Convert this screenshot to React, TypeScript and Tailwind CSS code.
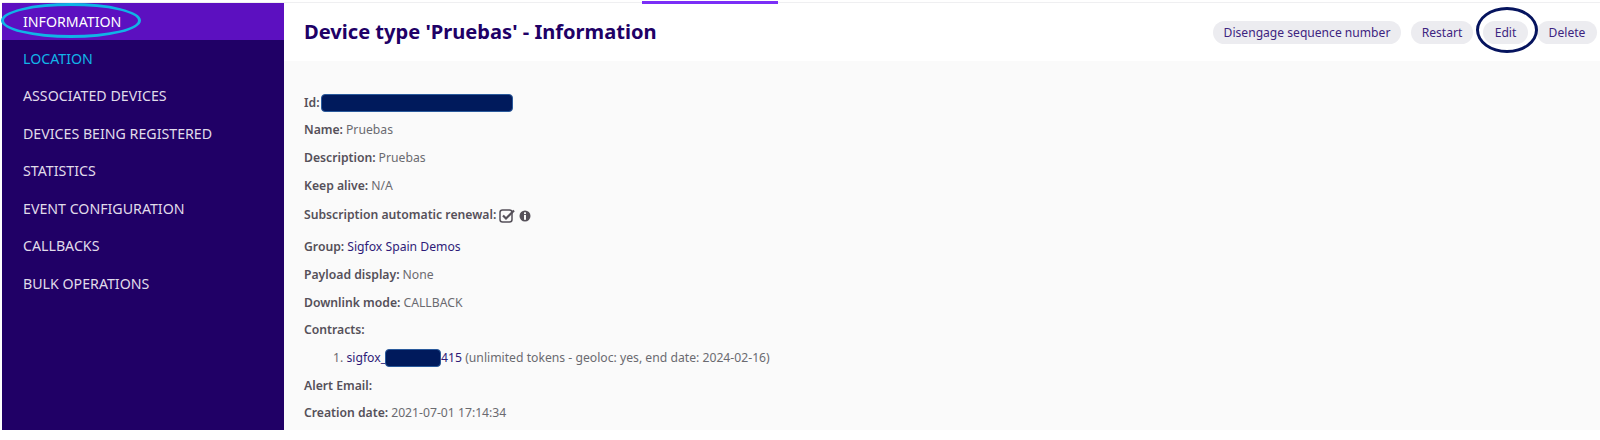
import React from 'react';

const navItems = [
  'INFORMATION',
  'LOCATION',
  'ASSOCIATED DEVICES',
  'DEVICES BEING REGISTERED',
  'STATISTICS',
  'EVENT CONFIGURATION',
  'CALLBACKS',
  'BULK OPERATIONS',
];

const actions = [
  { label: 'Disengage sequence number', width: 'w-[188px]', gap: 'mr-[10px]' },
  { label: 'Restart', width: 'w-[62px]', gap: 'mr-[10px]' },
  { label: 'Edit', width: 'w-[45px]', gap: 'mr-[9px]' },
  { label: 'Delete', width: 'w-[60px]', gap: '' },
];

function Redacted({ className }: { className: string }) {
  return <span className={`inline-block h-[18px] ${className} rounded-[4px] bg-[#001a5c] border border-[#2a5a9c] align-middle`} />;
}

function Row({ label, className = '', children }: { label: string; className?: string; children?: React.ReactNode }) {
  return (
    <div className={`flex h-[27.7px] items-center gap-[3px] whitespace-pre ${className}`}>
      <b className="font-semibold text-[#555059]">{label}</b>
      {children}
    </div>
  );
}

export default function App() {
  return (
    <div className="h-[440px] w-[1600px] overflow-hidden bg-white pl-[2px] pt-[2px] font-['Noto_Sans',sans-serif]">
      <div className="relative h-[428px] w-[1598px] border-t border-[#efeff1]">
        <div className="flex h-full">
          <nav className="flex h-full w-[282px] shrink-0 flex-col bg-[#200066] text-[14.2px] leading-[37.4px] text-[#e0dcea]">
            {navItems.map((item, i) => (
              <div
                key={item}
                className={
                  i === 0
                    ? 'h-[36.5px] bg-[#5c10c0] pl-[21px] text-white'
                    : i === 1
                      ? 'h-[37.5px] pl-[21px] text-[#12b5e8]'
                      : 'h-[37.5px] pl-[21px]'
                }
              >
                {item}
              </div>
            ))}
          </nav>

          <main className="flex min-w-0 flex-1 flex-col">
            <header className="flex h-[58px] shrink-0 items-center justify-between bg-white pl-[20px] pr-[3px]">
              <h1 className="text-[20.1px] font-bold text-[#200066]">Device type 'Pruebas' - Information</h1>
              <div className="flex">
                {actions.map((action) => (
                  <button
                    key={action.label}
                    className={`h-[23px] ${action.width} ${action.gap} rounded-full bg-[#ececf0] text-[12.1px] leading-[23px] text-[#3d2480]`}
                  >
                    {action.label}
                  </button>
                ))}
              </div>
            </header>

            <section className="flex-1 bg-[#fafafa] pl-[20px] pt-[28px] text-[12.2px] text-[#6a6a70]">
              <Row label="Id:">
                <Redacted className="-ml-[2px] w-[192px]" />
              </Row>
              <Row label="Name:">
                <span>Pruebas</span>
              </Row>
              <Row label="Description:">
                <span>Pruebas</span>
              </Row>
              <Row label="Keep alive:">
                <span>N/A</span>
              </Row>
              <Row label="Subscription automatic renewal:" className="mb-[4.5px] mt-[1.5px]">
                <svg width="17" height="15" viewBox="0 0 17 15" fill="none" stroke="#555059" strokeWidth="1.5">
                  <rect x="1" y="2" width="12" height="12" rx="2.5" />
                  <path d="M4 7.5 7 10.5 15 2.5" strokeWidth="2.2" />
                </svg>
                <svg width="12" height="12" viewBox="0 0 12 12" className="mt-[2px]">
                  <circle cx="6" cy="6" r="5.5" fill="#555059" />
                  <rect x="5" y="2.3" width="2" height="1.8" fill="#fafafa" />
                  <rect x="5" y="5" width="2" height="4.8" fill="#fafafa" />
                </svg>
              </Row>
              <Row label="Group:">
                <span className="text-[#2e1a78]">Sigfox Spain Demos</span>
              </Row>
              <Row label="Payload display:">
                <span>None</span>
              </Row>
              <Row label="Downlink mode:">
                <span>CALLBACK</span>
              </Row>
              <Row label="Contracts:" />
              <div className="flex h-[27.7px] items-center whitespace-pre pl-[29px]">
                <span>1. </span>
                <span className="text-[#2e1a78]">sigfox_</span>
                <Redacted className="-ml-[1px] w-[56px]" />
                <span className="text-[#2e1a78]">415</span>
                <span> (unlimited tokens - geoloc: yes, end date: 2024-02-16)</span>
              </div>
              <Row label="Alert Email:" />
              <Row label="Creation date:">
                <span>2021-07-01 17:14:34</span>
              </Row>
            </section>
          </main>
        </div>

        <span className="absolute left-[640px] top-[-2px] h-[3px] w-[136px] bg-[#7b2ff7]" />
        <span className="absolute left-[-1px] top-0 h-[35px] w-[140px] rounded-[50%] border-[3px] border-[#10b4e6]" />
        <span className="absolute left-[1474px] top-[4px] h-[46px] w-[62px] rounded-[50%] border-[3px] border-[#06145e]" />
      </div>
    </div>
  );
}
